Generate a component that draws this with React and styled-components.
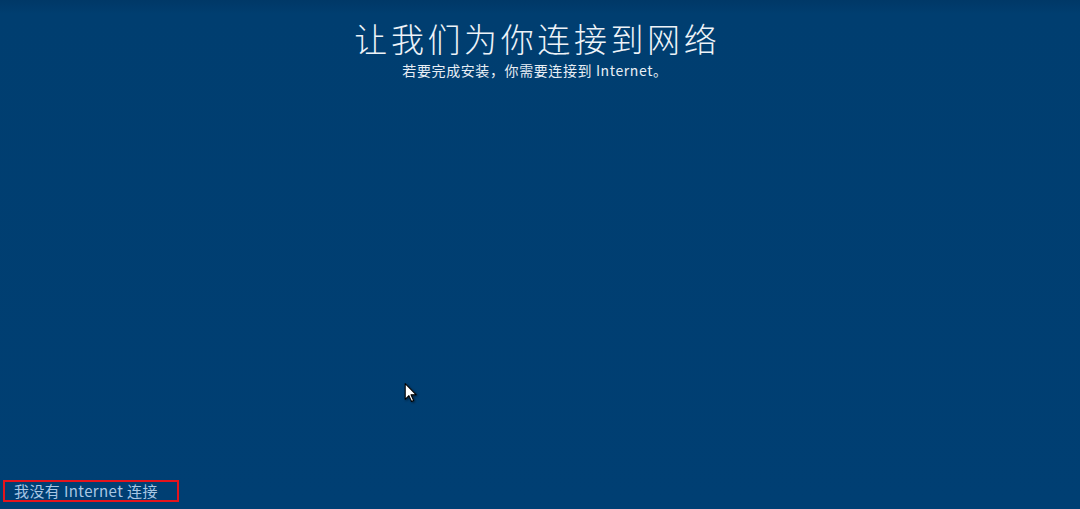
import React from "react";
import styled, { createGlobalStyle } from "styled-components";

const GlobalStyle = createGlobalStyle`
  html, body {
    margin: 0;
    padding: 0;
    height: 100%;
  }
  #root {
    height: 100%;
  }
`;

const Screen = styled.div`
  position: relative;
  width: 100vw;
  height: 100vh;
  overflow: hidden;
  display: flex;
  flex-direction: column;
  justify-content: space-between;
  background: linear-gradient(180deg, #003867 0px, #003e70 14px, #003f73 100%);
  font-family: "Noto Sans CJK SC", "Noto Sans", sans-serif;
  color: #f2f6fa;
`;

const Header = styled.header`
  display: flex;
  flex-direction: column;
  align-items: center;
  padding-top: 20px;
  padding-left: 2px;
`;

const Title = styled.h1`
  margin: 0 7.4px 0 0;
  font-size: 33px;
  font-weight: 300;
  line-height: 36px;
  letter-spacing: 3.6px;
  color: #eef3f8;
`;

const Subtitle = styled.p`
  margin: 5px 0 0 -12px;
  font-size: 14px;
  line-height: 18px;
  letter-spacing: 0.6px;
  color: #e8eef5;
`;

const Footer = styled.footer`
  display: flex;
  padding: 0 0 7px 3px;
`;

const OfflineLink = styled.a`
  display: block;
  width: 163px;
  height: 18px;
  padding: 0 0 0 9px;
  border: 2px solid #e5141c;
  font-size: 15px;
  line-height: 18px;
  letter-spacing: 0.4px;
  color: #a9c7e4;
  text-decoration: none;
  cursor: pointer;
`;

const Cursor = styled.svg`
  position: absolute;
  left: 404px;
  top: 383px;
  width: 14px;
  height: 20px;
  filter: drop-shadow(1px 1px 1px rgba(0, 0, 0, 0.5));
`;

const Pointer = () => (
  <Cursor viewBox="0 0 12 19">
    <path
      d="M0.5 0.5 L0.5 15.5 L4 12 L6.5 17.5 L8.5 16.6 L6 11.2 L11 11.2 Z"
      fill="#ffffff"
      stroke="#000000"
      strokeWidth="1"
      strokeLinejoin="round"
    />
  </Cursor>
);

const App = () => {
  return (
    <>
      <GlobalStyle />
      <Screen>
        <Header>
          <Title>让我们为你连接到网络</Title>
          <Subtitle>若要完成安装，你需要连接到 Internet。</Subtitle>
        </Header>
        <Footer>
          <OfflineLink>我没有 Internet 连接</OfflineLink>
        </Footer>
        <Pointer />
      </Screen>
    </>
  );
};

export default App;
